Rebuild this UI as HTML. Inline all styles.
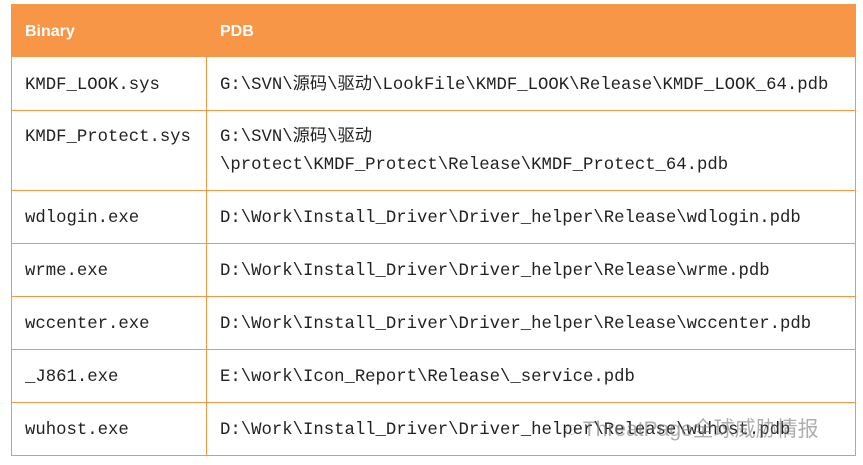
<!DOCTYPE html>
<html><head><meta charset="utf-8"><style>
body{margin:0;background:#fff;width:863px;height:465px;overflow:hidden;position:relative}
.hd{position:absolute;left:11px;top:4px;width:845px;height:53px;background:#f79646}
.h{position:absolute;top:23px;color:#fff;font:bold 16px "Liberation Sans",sans-serif}
.hl{position:absolute;left:11px;width:845px;height:1px;background:#f79646}
.vl{position:absolute;top:57px;width:1px;height:399px;background:#f79646}
.t{position:absolute;font:17.3px "Liberation Mono","Noto Sans CJK SC",monospace;color:#222;line-height:28px;white-space:nowrap}
.wm{position:absolute;left:565px;top:413px;font:21px "Liberation Sans","Noto Sans CJK SC",sans-serif;color:rgba(120,120,120,.6)}
</style></head><body>
<div class="hd"></div>
<div class="h" style="left:25px">Binary</div>
<div class="h" style="left:220px">PDB</div>
<div class="hl" style="top:110px"></div>
<div class="hl" style="top:190px"></div>
<div class="hl" style="top:243px"></div>
<div class="hl" style="top:296px"></div>
<div class="hl" style="top:349px"></div>
<div class="hl" style="top:402px"></div>
<div class="hl" style="top:455px"></div>
<div class="vl" style="left:11px"></div>
<div class="vl" style="left:206px"></div>
<div class="vl" style="left:855px"></div>
<div class="t" style="left:25px;top:72px">KMDF_LOOK.sys</div>
<div class="t" style="left:220px;top:72px">G:\SVN\源码\驱动\LookFile\KMDF_LOOK\Release\KMDF_LOOK_64.pdb</div>
<div class="t" style="left:25px;top:124px">KMDF_Protect.sys</div>
<div class="t" style="left:220px;top:124px">G:\SVN\源码\驱动<br>\protect\KMDF_Protect\Release\KMDF_Protect_64.pdb</div>
<div class="t" style="left:25px;top:205px">wdlogin.exe</div>
<div class="t" style="left:220px;top:205px">D:\Work\Install_Driver\Driver_helper\Release\wdlogin.pdb</div>
<div class="t" style="left:25px;top:258px">wrme.exe</div>
<div class="t" style="left:220px;top:258px">D:\Work\Install_Driver\Driver_helper\Release\wrme.pdb</div>
<div class="t" style="left:25px;top:311px">wccenter.exe</div>
<div class="t" style="left:220px;top:311px">D:\Work\Install_Driver\Driver_helper\Release\wccenter.pdb</div>
<div class="t" style="left:25px;top:364px">_J861.exe</div>
<div class="t" style="left:220px;top:364px">E:\work\Icon_Report\Release\_service.pdb</div>
<div class="t" style="left:25px;top:417px">wuhost.exe</div>
<div class="t" style="left:220px;top:417px">D:\Work\Install_Driver\Driver_helper\Release\wuhost.pdb</div>
<div class="wm">◌ ThreatPage全球威胁情报</div>
</body></html>
